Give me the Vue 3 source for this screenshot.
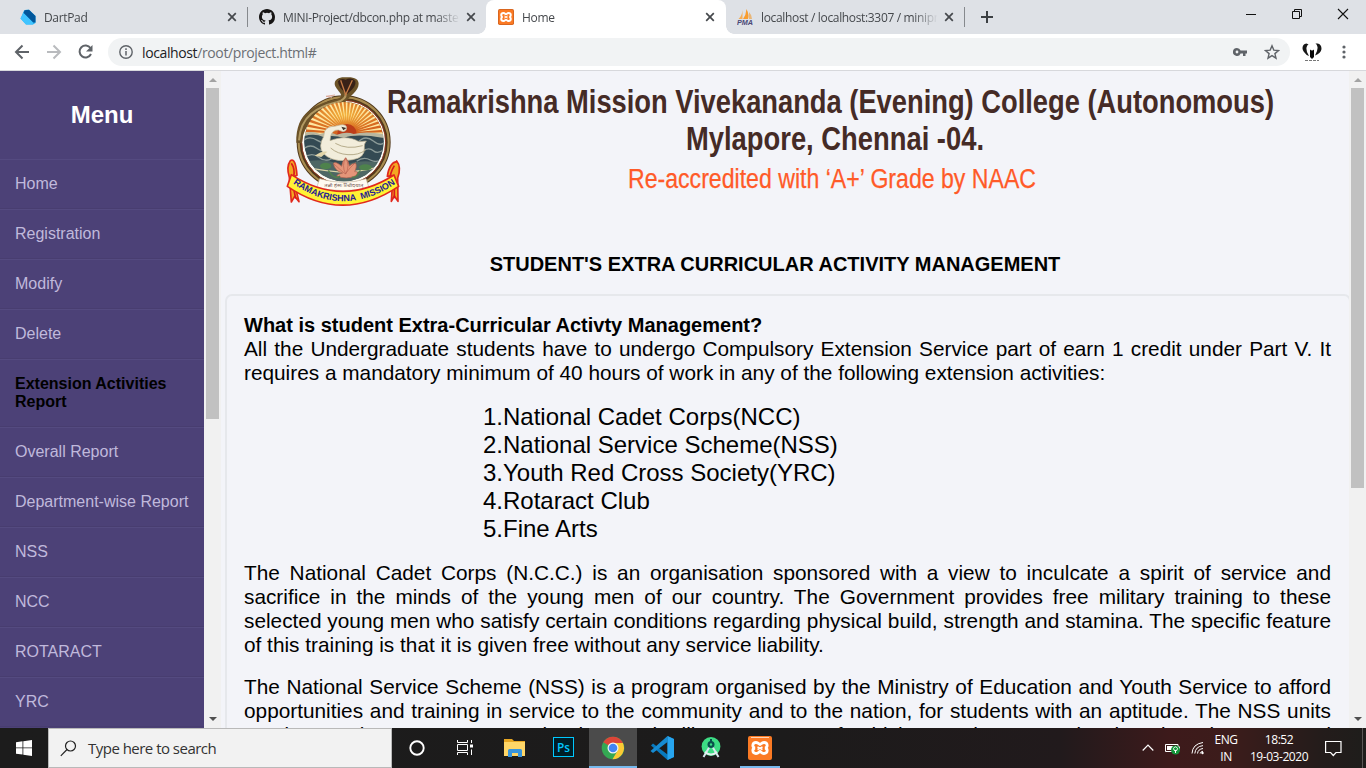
<script setup>
const tabs = [
  { id: 'dart', title: 'DartPad', sep: true },
  { id: 'github', title: 'MINI-Project/dbcon.php at master', sep: false },
  { id: 'xampp', title: 'Home', active: true },
  { id: 'pma', title: 'localhost / localhost:3307 / minipro', sep: true }
]
const menu = ['Home', 'Registration', 'Modify', 'Delete', 'Extension Activities Report', 'Overall Report',
  'Department-wise Report', 'NSS', 'NCC', 'ROTARACT', 'YRC']
const activities = ['National Cadet Corps(NCC)', 'National Service Scheme(NSS)', 'Youth Red Cross Society(YRC)', 'Rotaract Club', 'Fine Arts']
const intro = [
  'All the Undergraduate students have to undergo Compulsory Extension Service part of earn 1 credit under Part V. It',
  'requires a mandatory minimum of 40 hours of work in any of the following extension activities:'
]
const ncc = [
  'The National Cadet Corps (N.C.C.) is an organisation sponsored with a view to inculcate a spirit of service and',
  'sacrifice in the minds of the young men of our country. The Government provides free military training to these',
  'selected young men who satisfy certain conditions regarding physical build, strength and stamina. The specific feature',
  'of this training is that it is given free without any service liability.'
]
const nss = [
  'The National Service Scheme (NSS) is a program organised by the Ministry of Education and Youth Service to afford',
  'opportunities and training in service to the community and to the nation, for students with an aptitude. The NSS units',
  'conduct various programmes in the rural villages, some of which are the most developed projects around'
]
const rays = Array.from({ length: 25 }, (_, i) => {
  const a = Math.PI + (i / 24) * Math.PI
  const b = 0.035
  const p = (t, r) => `${(200 + Math.cos(t) * r).toFixed(1)},${(190 + Math.sin(t) * r).toFixed(1)}`
  return `${p(a, 34)} ${p(a - b, 140)} ${p(a + b, 140)}`
})
</script>

<template>
  <div class="screen">
    <header class="tabstrip">
      <div v-for="t in tabs" :key="t.id" class="tab" :class="{ active: t.active, sep: t.sep }">
        <svg v-if="t.id === 'dart'" class="fav" viewBox="0 0 16 16">
          <path d="M4 1.500 6 .8h3L15.500 7v7L13 15.500H6L.5 9.500Z" fill="#29b6f6" />
          <path d="M4.500 1.300 9 .8 15.500 7v6.500L13 13.500 3.500 4Z" fill="#01579b" />
          <path d="m3.500 4 9.500 9.500V15.500H6L.5 9.500Z" fill="#40c4ff" />
        </svg>
        <svg v-else-if="t.id === 'github'" class="fav" viewBox="0 0 16 16">
          <path fill="#171515" d="M8 0C3.580 0 0 3.580 0 8c0 3.540 2.290 6.530 5.470 7.590.4.070.55-.17.55-.38 0-.19-.01-.82-.01-1.490-2.010.37-2.530-.49-2.690-.94-.09-.23-.48-.94-.82-1.130-.28-.15-.68-.52-.01-.53.63-.01 1.080.58 1.230.82.72 1.210 1.870.87 2.330.66.070-.52.28-.87.51-1.070-1.780-.2-3.640-.89-3.640-3.950 0-.87.31-1.590.82-2.150-.08-.2-.36-1.020.08-2.120 0 0 .67-.21 2.200.82a7.600 7.600 0 0 1 4 0c1.530-1.040 2.200-.82 2.200-.82.44 1.100.16 1.920.08 2.120.51.56.82 1.270.82 2.150 0 3.070-1.870 3.750-3.650 3.950.29.25.54.73.54 1.480 0 1.070-.01 1.930-.01 2.200 0 .21.15.46.55.38A8 8 0 0 0 16 8c0-4.420-3.580-8-8-8Z" />
        </svg>
        <svg v-else-if="t.id === 'xampp'" class="fav" viewBox="0 0 24 24">
          <rect width="24" height="24" rx="2.500" fill="#d9661f" />
          <rect x="1.500" y="1.500" width="21" height="21" rx="1" fill="#fb7a24" />
          <path d="M8 6c-4 0-4 5.500-1 6-3 .5-3 6 1 6 2.500 0 3-2 4-2s1.500 2 4 2c4 0 4-5.500 1-6 3-.5 3-6-1-6-2.500 0-3 2-4 2S10.500 6 8 6Z" fill="none" stroke="#fff" stroke-width="3" />
          <path d="m9.500 10.500 5 3m0-3-5 3" stroke="#fff" stroke-width="1.500" />
        </svg>
        <svg v-else class="fav" viewBox="0 0 16 16">
          <path d="M5.500 1v9H1.500Q5 7 5.500 1Z" fill="#f5ad55" /><path d="M9.500 0q3 6 1.500 10H6Q9 6 9.500 0Z" fill="#f89c2e" />
          <path d="M12 3q3 3 3 7h-3Z" fill="#e9b678" />
          <text x="0" y="15.600" font-size="6.500" font-weight="700" font-style="italic" textLength="16" lengthAdjust="spacingAndGlyphs" fill="#4a4876" font-family="Liberation Sans, sans-serif">PMA</text>
        </svg>
        <span class="tab-title">{{ t.title }}</span>
        <svg class="close" viewBox="0 0 10 10"><path d="m1.200 1.200 7.600 7.600m0-7.600L1.200 8.800" stroke="#45484c" stroke-width="1.700" /></svg>
      </div>
      <svg class="plus" viewBox="0 0 14 14"><path d="M7 1v12M1 7h12" stroke="#3c4043" stroke-width="2" /></svg>
      <svg class="winbtns" viewBox="0 0 106 14">
        <path d="M0 7.500h10" stroke="#111" />
        <path d="M46.500 4.500h7v7h-7zM48.500 4V2.500h7v7H54" fill="none" stroke="#111" />
        <path d="m92 2 10 10m0-10L92 12" stroke="#111" stroke-width="1.100" />
      </svg>
    </header>

    <div class="toolbar">
      <svg class="nav" viewBox="0 0 94 24">
        <g fill="none" stroke-width="2">
          <path d="M15 12H2m6.500-6.500L2 12l6.500 6.500" stroke="#5f6368" />
          <path d="M33 12h13m-6.500-6.500L46 12l-6.500 6.500" stroke="#b9bbbe" />
          <path d="M76.500 8A6 6 0 1 0 77 14" stroke="#5f6368" />
        </g>
        <path d="M78.500 5v6.500H72Z" fill="#5f6368" />
      </svg>
      <div class="omnibox">
        <svg class="info" viewBox="0 0 14 14"><circle cx="7" cy="7" r="6.200" fill="none" stroke="#5f6368" stroke-width="1.400" /><path d="M7 6v4.500M7 3.300V5" stroke="#5f6368" stroke-width="1.500" /></svg>
        <span class="url"><b>localhost</b>/root/project.html#</span>
        <svg class="key" viewBox="0 0 14 10"><path fill="#5f6368" fill-rule="evenodd" d="M4 1a4 4 0 1 0 3.600 5.500H10V9h2.500V6.500H14v-3H7.600A4 4 0 0 0 4 1Zm0 2.600a1.400 1.400 0 1 1 0 2.800 1.400 1.400 0 0 1 0-2.800Z" /></svg>
        <svg class="star" viewBox="0 0 16 16"><path d="m8 1.800 1.800 4.300 4.700.4-3.600 3.100 1.100 4.600L8 11.700l-4 2.500 1.100-4.600L1.500 6.500l4.700-.4Z" fill="none" stroke="#5f6368" stroke-width="1.400" /></svg>
      </div>
      <svg class="avatar" viewBox="0 0 20 20">
        <path d="M4.500 1.500C0 2-.5 7 2 10q2 3 5 4Q4 10 4.500 5.500q.5-2.500 2-3Zm11 0q4 .5 4 5.500-.5 4-6.500 6.500 3-5 2.500-8.500-.5-3-2-3.500Z" fill="#161616" />
        <path d="M8 7.500q2 2 4 0V15l-2 2-2-2Z" fill="#080808" />
        <path d="M3 18.500h14" stroke="#777" stroke-dasharray="3 1" />
      </svg>
      <svg class="dots" viewBox="0 0 4 14"><g fill="#5f6368"><circle cx="2" cy="2" r="1.600" /><circle cx="2" cy="7" r="1.600" /><circle cx="2" cy="12" r="1.600" /></g></svg>
    </div>

    <div class="page">
      <nav class="sidebar">
        <h2>Menu</h2>
        <a v-for="m in menu" :key="m" :class="{ current: m.startsWith('Extension') }">{{ m }}</a>
      </nav>
      <div class="scroll side"><i class="up"></i><div class="thumb"></div><i class="down"></i></div>

      <main>
        <div class="banner">
          <svg class="emblem" viewBox="0 0 390 426">
            <defs>
              <clipPath id="disc"><circle cx="192" cy="215" r="119" /></clipPath>
              <path id="ribbonText" d="M39 340Q187 446 345 342" />
              <radialGradient id="sun" cx=".5" cy=".4"><stop offset="0" stop-color="#f4b53f" /><stop offset="1" stop-color="#d5651f" /></radialGradient>
            </defs>
            <circle cx="191" cy="217" r="133" fill="#fdfbf4" stroke="#51391b" stroke-width="16" />
            <circle cx="191" cy="217" r="135" fill="none" stroke="#a98c50" stroke-width="6" />
            <circle cx="191" cy="217" r="126" fill="none" stroke="#8e3522" stroke-width="3" />
            <path d="M49 218C47 126 105 104 168 88 204 78 166 62 164 42c0-14 13-21 32-20 27-2 40 5 40 19 0 23-28 37-38 53-9 15-66 17-94 48-25 25-38 52-38 78Z" fill="#6b5228" />
            <path d="M57 211C62 137 112 111 170 97q29-8 27-26" fill="none" stroke="#b39a62" stroke-width="6" />
            <path d="M174 34q10-11 23-5 17-8 29 4 5 17-25 39-27-19-27-38Z" fill="#382117" /><path d="m182 31 15 43 20-43" fill="none" stroke="#c57b45" stroke-width="4" />
            <path d="m165 75-27 4 18 3" fill="none" stroke="#dba99b" stroke-width="3" />
            <g clip-path="url(#disc)">
              <rect x="70" y="94" width="245" height="245" fill="#394d55" />
              <rect x="70" y="94" width="245" height="100" fill="url(#sun)" />
              <polygon v-for="(r, i) in rays" :key="i" :points="r" fill="#ffe7a0" />
              <circle cx="201" cy="191" r="29" fill="#bd3d19" />
              <path d="M65 191q28-11 55 1 26-9 51 2 28-10 50-2 35-10 96 1v18H65Z" fill="#b9b7a0" />
              <path d="M65 200q38-12 65 1 30-8 62 3 36-15 125 1v70H65Z" fill="#344a53" />
              <g fill="none" stroke="#8c9b98" stroke-width="4"><path d="M70 211q19-15 42 0t45 1M73 235q19-14 37 0t34 0M72 262q25-16 44 0t41 3M231 220q23-28 49-7t38-3M244 244q23-14 36-2t34-5M230 274q20-15 41-4t35-4" /></g>
              <path d="M69 276q60-15 122 11 57-24 124-5v65H69Z" fill="#4e6764" />
              <path d="M75 292q56 10 114 15 66-3 121-20" fill="none" stroke="#d9d3a6" stroke-width="4" />
            </g>
            <path d="M134 184q8-15 30-15l16-4q20-3 20 9 0 10-11 11l-14-5q-18-1-23 18l-2 14c32-12 62-12 87 3l22-2q-8 9-6 22 1 29-35 34-47 9-76-9-28-18-17-48 7-10 9-28Z" fill="#f2eddb" stroke="#bdb294" stroke-width="2" />
            <path d="m184 170 15 4-9 7Z" fill="#3a3028" /><path d="M152 234q20 18 52 20t53-14m-91-20q34 20 82 7" fill="none" stroke="#b6ac8b" stroke-width="3" />
            <path d="M104 257q22-16 38-12l-18 16Z" fill="#e1d4a8" />
            <path d="M197 263q-11 11-12 26-18-16-25-9 4 23 28 29-16 3-18 9 30 12 58-1 10-14-4-12 8-17 3-25-12 0-19 8-2-15-11-25Z" fill="#e49579" stroke="#a95c4c" stroke-width="2" />
            <path d="M197 264q-13 22 0 48 14-25 0-48m-36 17q19 18 35 31m31-35q-18 16-31 35" fill="none" stroke="#ba6452" stroke-width="2" />
            <g fill="#4e824c"><ellipse cx="137" cy="288" rx="17" ry="10" /><ellipse cx="256" cy="292" rx="19" ry="9" /><path d="M145 301q19 31 35 17m61-17q-12 26-26 20" fill="none" stroke="#4e824c" stroke-width="4" /></g>
            <path d="M119 326q75 22 139 0l9 27q-74 18-157 0Z" fill="#fffaf0" stroke="#c5b89e" stroke-width="2" />
            <text x="133" y="351" textLength="117" lengthAdjust="spacingAndGlyphs" font-size="15" fill="#765c57" font-family="Noto Sans, sans-serif">तन्नो हंसः प्रचोदयात्</text>
            <g stroke="#e1281c" stroke-width="5" stroke-linejoin="round" fill="#f3a822">
              <path d="M31 272q16-10 20 44l-12 6 18 73-13-16-10 17-6-74Q18 290 31 272Z" />
              <path d="M350 275q-22 3-28 44l17-2-5 77 9-16 11 16-1-70q12-33-3-51Z" />
            </g>
            <path d="M34 280q12 17 7 42m0 34 6 30m296-99q-14 24-12 40m12 30 0 28" fill="none" stroke="#d81820" stroke-width="5" />
            <path d="M34 314Q187 414 342 315L356 349Q187 462 22 349Z" fill="#fff335" stroke="#e1281c" stroke-width="5" stroke-linejoin="round" />
            <text font-size="27" font-weight="700" fill="#252094" font-family="Liberation Sans, sans-serif"><textPath href="#ribbonText" textLength="330">RAMAKRISHNA&#160; MISSION</textPath></text>
          </svg>
          <svg class="banner-text" viewBox="0 0 900 130">
            <g font-family="Liberation Sans, sans-serif">
              <text x="7" y="36.800" font-size="33.600" font-weight="700" fill="#452b26" textLength="887" lengthAdjust="spacingAndGlyphs">Ramakrishna Mission Vivekananda (Evening) College (Autonomous)</text>
              <text x="306" y="74" font-size="33.600" font-weight="700" fill="#452b26" textLength="298" lengthAdjust="spacingAndGlyphs">Mylapore, Chennai -04.</text>
              <text x="248" y="112.300" font-size="27" fill="#ff5a28" stroke="#ff5a28" stroke-width=".25" textLength="408" lengthAdjust="spacingAndGlyphs">Re-accredited with ‘A+’ Grade by NAAC</text>
            </g>
          </svg>
        </div>
        <h3>STUDENT'S EXTRA CURRICULAR ACTIVITY MANAGEMENT</h3>
        <section class="card">
          <strong>What is student Extra-Curricular Activty Management?</strong>
          <p><span v-for="(l, i) in intro" :key="i" :class="{ last: i === intro.length - 1 }">{{ l }}</span></p>
          <ul><li v-for="(a, i) in activities" :key="a">{{ i + 1 }}.{{ a }}</li></ul>
          <p><span v-for="(l, i) in ncc" :key="i" :class="{ last: i === ncc.length - 1 }">{{ l }}</span></p>
          <p><span v-for="(l, i) in nss" :key="i">{{ l }}</span></p>
        </section>
      </main>
      <div class="scroll main-scroll"><i class="up"></i><div class="thumb"></div><i class="down"></i></div>
    </div>

    <footer class="taskbar">
      <div class="start"><svg viewBox="0 0 16 16"><path fill="#fff" d="M0 2.200 6.500 1.300v6.200H0ZM7.300 1.200 16 0v7.500H7.300ZM0 8.300h6.500v6.300L0 13.700Zm7.300 0H16V16l-8.700-1.200Z" /></svg></div>
      <div class="search">
        <svg viewBox="0 0 17 17"><circle cx="10.500" cy="6" r="5" fill="none" stroke="#222" stroke-width="1.200" /><path d="M7 9.500.8 15.800" stroke="#222" stroke-width="1.200" /></svg>
        <span>Type here to search</span>
      </div>
      <div class="apps">
        <div class="app"><svg viewBox="0 0 24 24"><circle cx="12" cy="12" r="6.700" fill="none" stroke="#fff" stroke-width="1.900" /></svg></div>
        <div class="app"><svg viewBox="0 0 24 24"><path d="M3.500 4v2.500h10V4M3.500 19v-2.500h10V19M3.500 8.500h10v6h-10zM17.500 4v3m0 6.500V19" fill="none" stroke="#fff" /><path d="M16 8.500h3v3h-3z" fill="#fff" /></svg></div>
        <div class="app"><svg viewBox="0 0 24 24"><path d="M1 3h8l2 2h11v15H1Z" fill="#e8a723" /><path d="M1 6h21v14H1Z" fill="#ffd667" /><path d="M5 21v-6.500Q5 13 6.500 13h11q1.500 0 1.500 1.500V21h-4v-4H9v4Z" fill="#3995db" /></svg></div>
        <div class="app"><svg viewBox="0 0 24 24"><rect x="1.500" y="1.500" width="20" height="19" fill="#001d26" stroke="#00c8ff" /><text x="5" y="15.500" font-size="12" font-weight="600" textLength="13" lengthAdjust="spacingAndGlyphs" fill="#00c8ff" font-family="Open Sans, sans-serif">Ps</text></svg></div>
        <div class="app chrome"><svg viewBox="0 0 24 24"><circle cx="12" cy="12" r="11.300" fill="#34a853" /><path d="M12 12 2.200 6.350A11.300 11.300 0 0 1 21.800 6.350L21.500 7H12Z" fill="#dc4538" /><path d="M12 7h9.900A11.300 11.300 0 0 1 11.500 23.300L17 14Z" fill="#fcc934" /><circle cx="12" cy="12" r="5.500" fill="#f4f4f4" /><circle cx="12" cy="12" r="4.300" fill="#4285f4" /></svg></div>
        <div class="app"><svg viewBox="0 0 24 24"><path d="M17.500 0 24 3v18l-6.500 3L1 9.500 3 7.500l14.500 11Z" fill="#0879bd" /><path d="M17.500 0v6L3 17l-2.500-2Z" fill="#168bd2" /><path d="M17.500 0 24 3v18l-6.500 3Z" fill="#27a5ef" /></svg></div>
        <div class="app"><svg viewBox="0 0 24 24"><circle cx="12" cy="10.500" r="9.400" fill="#3ddc84" /><path d="m11 10-6.500 11M13 10l6.500 11" stroke="#d7e6ed" stroke-width="2" /><path d="M6 16q6 5 12 0" fill="none" stroke="#e8f1f3" stroke-width="2" /><circle cx="12" cy="8.500" r="3.500" fill="#084f4b" /><circle cx="12" cy="8.500" r="1.200" fill="#3ddc84" /><path d="M12 3v3" stroke="#084f4b" stroke-width="2" /></svg></div>
        <div class="app xam"><svg viewBox="0 0 24 24"><rect width="24" height="24" rx="2" fill="#fb7a24" /><path d="M3 1.500h18" stroke="#fbd3b6" /><path d="M8 6.500c-4 0-4 5-1 5.500-3 .5-3 5.500 1 5.500 2.500 0 3-2 4-2s1.500 2 4 2c4 0 4-5 1-5.500 3-.5 3-5.500-1-5.500-2.500 0-3 2-4 2s-1.500-2-4-2Z" fill="none" stroke="#fff" stroke-width="2.800" /><path d="m9.500 11 5 2.500m0-2.500-5 2.500" stroke="#fff" stroke-width="1.500" /></svg></div>
      </div>
      <div class="tray">
        <svg class="chev" viewBox="0 0 12 8"><path d="m.7 6.500 5.300-5.300 5.300 5.300" fill="none" stroke="#fff" stroke-width="1.200" /></svg>
        <svg class="batt" viewBox="0 0 16 13"><path d="M.5 2.500h12.500v7H.5z" fill="none" stroke="#fff" /><path d="M2 4h6v4H2zM13 4.500h2v3h-2z" fill="#fff" /><circle cx="10.500" cy="8" r="4.500" fill="#14953a" /><path d="M10.500 11V8m-2-1.500q2-3.500 4 0-.5 2.500-2 2.500t-2-2.500Z" fill="none" stroke="#fff" /></svg>
        <svg class="wifi" viewBox="0 0 14 14"><g fill="none" stroke="#fff"><path d="M1 12.500Q1.500 3 12 1.500M3.800 12.500Q4.500 5.500 12 4.600M6.500 12.500q.5-4.300 5.500-5M9.200 12.500q.3-1.800 2.800-2.300" /></g><circle cx="11.500" cy="12" r="1.200" fill="#fff" /></svg>
        <div class="lang"><span>ENG</span><span>IN</span></div>
        <div class="clock"><span>18:52</span><span>19-03-2020</span></div>
        <svg class="note" viewBox="0 0 17 17"><path d="M.6 1.500h15.400v11H11l-2.700 3-2.700-3h-5Z" fill="none" stroke="#fff" stroke-width="1.200" /></svg>
      </div>
      <div class="peek"></div>
    </footer>
  </div>
</template>

<style>
html, body { margin: 0; overflow: hidden; }
</style>

<style scoped>
* { box-sizing: border-box; }
svg { display: block; flex: none; }
.screen { width: 1366px; height: 768px; display: flex; flex-direction: column; overflow: hidden; font-family: "Liberation Sans", Arial, sans-serif; background: #f3f4f9; }
.tabstrip { height: 34px; flex: none; display: flex; background: #dee1e6; padding-left: 8px; font-family: "Open Sans", sans-serif; }
.tab { width: 239px; height: 34px; display: flex; align-items: center; padding: 0 10px 0 12px; position: relative; }
.tab.active { background: #fff; border-radius: 8px 8px 0 0; width: 240px; margin-right: -1px; }
.tab.active::before, .tab.active::after { content: ""; position: absolute; bottom: 0; width: 8px; height: 8px; }
.tab.active::before { left: -8px; background: radial-gradient(circle at 0 0, transparent 7.500px, #fff 8px); }
.tab.active::after { right: -8px; background: radial-gradient(circle at 100% 0, transparent 7.500px, #fff 8px); }
.tab.sep::after { content: ""; position: absolute; right: -1px; top: 7px; width: 1px; height: 20px; background: #86898d; }
.fav { width: 16px; height: 16px; }
.tab-title { width: 176px; flex: none; margin-left: 8px; overflow: hidden; white-space: nowrap; font-size: 12px; letter-spacing: -0.340px; color: #45484c; -webkit-mask-image: linear-gradient(90deg, #000 152px, transparent 177px); mask-image: linear-gradient(90deg, #000 152px, transparent 177px); }
.close { width: 10px; height: 10px; margin-left: 7px; }
.plus { width: 14px; height: 14px; margin: 10px 0 0 16px; }
.winbtns { width: 106px; height: 14px; margin: 7px 14px 0 auto; }
.toolbar { height: 37px; flex: none; display: flex; align-items: center; background: #fff; border-bottom: 1px solid #d7d8dc; font-family: "Open Sans", sans-serif; }
.nav { width: 94px; height: 24px; margin-left: 14px; }
.omnibox { width: 1182px; height: 28px; border-radius: 14px; background: #f1f3f4; display: flex; align-items: center; padding: 0 10px 0 11px; }
.info { width: 14px; height: 14px; }
.url { margin-left: 9px; font-size: 14px; letter-spacing: -0.380px; color: #6b6f74; flex: 1; }
.url b { font-weight: 400; color: #202124; }
.key { width: 14px; height: 10px; margin-right: 17px; }
.star { width: 16px; height: 16px; }
.avatar { width: 20px; height: 20px; margin-left: 12px; }
.dots { width: 4px; height: 14px; margin-left: 20px; }
.page { height: 657px; flex: none; display: flex; overflow: hidden; }
.sidebar { width: 204px; flex: none; background: #4c4177; overflow: hidden; }
.sidebar h2 { margin: 0; height: 88px; line-height: 87px; text-align: center; color: #fff; font-size: 24px; }
.sidebar a { display: block; padding: 15px 10px 15px 15px; font-size: 16px; line-height: 18px; color: #c0b9dc; border-top: 1px solid #544a80; border-bottom: 1px solid #483d70; white-space: nowrap; }
.sidebar a.current { color: #000; font-weight: 700; white-space: normal; }
.scroll { width: 17px; flex: none; display: flex; flex-direction: column; align-items: center; background: #f1f1f1; }
.thumb { width: 13px; background: #c1c1c1; }
.side .thumb { height: 331px; }
.main-scroll .thumb { height: 400px; }
.up, .down { width: 0; height: 0; border: 4px solid transparent; }
.up { border-top: 0; border-bottom-color: #a3a3a3; margin: 7px 0 6px; }
.down { border-bottom: 0; border-top-color: #505050; margin: auto 0 7px; }
main { width: 1128px; flex: none; overflow: hidden; color: #000; background: #f3f4f9; }
.banner { height: 169px; display: flex; padding-left: 59px; }
.emblem { width: 130px; height: 142px; margin-top: -1px; }
.banner-text { width: 900px; height: 130px; margin: 5px 0 0 -30px; }
h3 { margin: 0 0 30px; width: 1108px; height: 24px; line-height: 48px; text-align: center; font-size: 20px; white-space: nowrap; }
.card { margin-left: 4px; width: 1126px; height: 600px; border: 2px solid #e6e8ec; border-radius: 7px; padding: 17px 18px 0 17px; font-size: 20.800px; line-height: 24px; }
.card strong { display: block; font-size: 20px; }
.card p { margin: 0 0 18px; }
.card p span { display: block; text-align: justify; text-align-last: justify; height: 24px; }
.card p span.last { text-align-last: left; }
.card ul { list-style: none; margin: 0 0 18px; padding: 0 0 0 239px; font-size: 24px; line-height: 28px; }
.taskbar { height: 40px; flex: none; display: flex; background: linear-gradient(90deg, #1c1c1c 0, #1c1b1b 780px, #211a1c 1060px, #3d1a1b 1170px, #3c1c1b 1230px, #241c1b 1320px, #1e1d1b 100%); color: #fff; font-family: "Open Sans", sans-serif; }
.start { width: 48px; display: grid; place-items: center; }
.start svg { width: 16px; height: 16px; }
.search { width: 344px; background: #f2f2f2; border: 1px solid #b9b9b9; display: flex; align-items: center; padding-left: 11px; color: #333; font-size: 15px; }
.search svg { width: 17px; height: 17px; }
.search span { margin-left: 11px; letter-spacing: -0.520px; }
.apps { display: flex; gap: 1px; margin-left: 1px; }
.app { width: 48px; height: 40px; display: grid; place-items: center; }
.app:first-child { width: 47px; margin-left: 0; }
.app:first-child + .app { margin-left: 1px; }
.app svg { width: 24px; height: 24px; }
.chrome { background: linear-gradient(#4b4b4b 38px, #76b9ed 38px); }
.xam { background: linear-gradient(#76b9ed, #76b9ed) 4px 38px / 40px 2px no-repeat; }
.tray { margin-left: auto; display: flex; align-items: center; padding-right: 20px; font-size: 12px; }
.peek { width: 4px; height: 40px; border-left: 1px solid #5a5655; }
.chev { width: 12px; height: 8px; margin-right: 11px; }
.batt { width: 16px; height: 13px; margin-right: 10px; }
.wifi { width: 14px; height: 14px; margin-right: 7px; }
.lang, .clock { display: flex; flex-direction: column; align-items: center; line-height: 17px; letter-spacing: -0.450px; }
.lang { width: 28px; margin-right: 6px; }
.clock { width: 66px; margin-right: 13px; }
.note { width: 17px; height: 17px; }
</style>
